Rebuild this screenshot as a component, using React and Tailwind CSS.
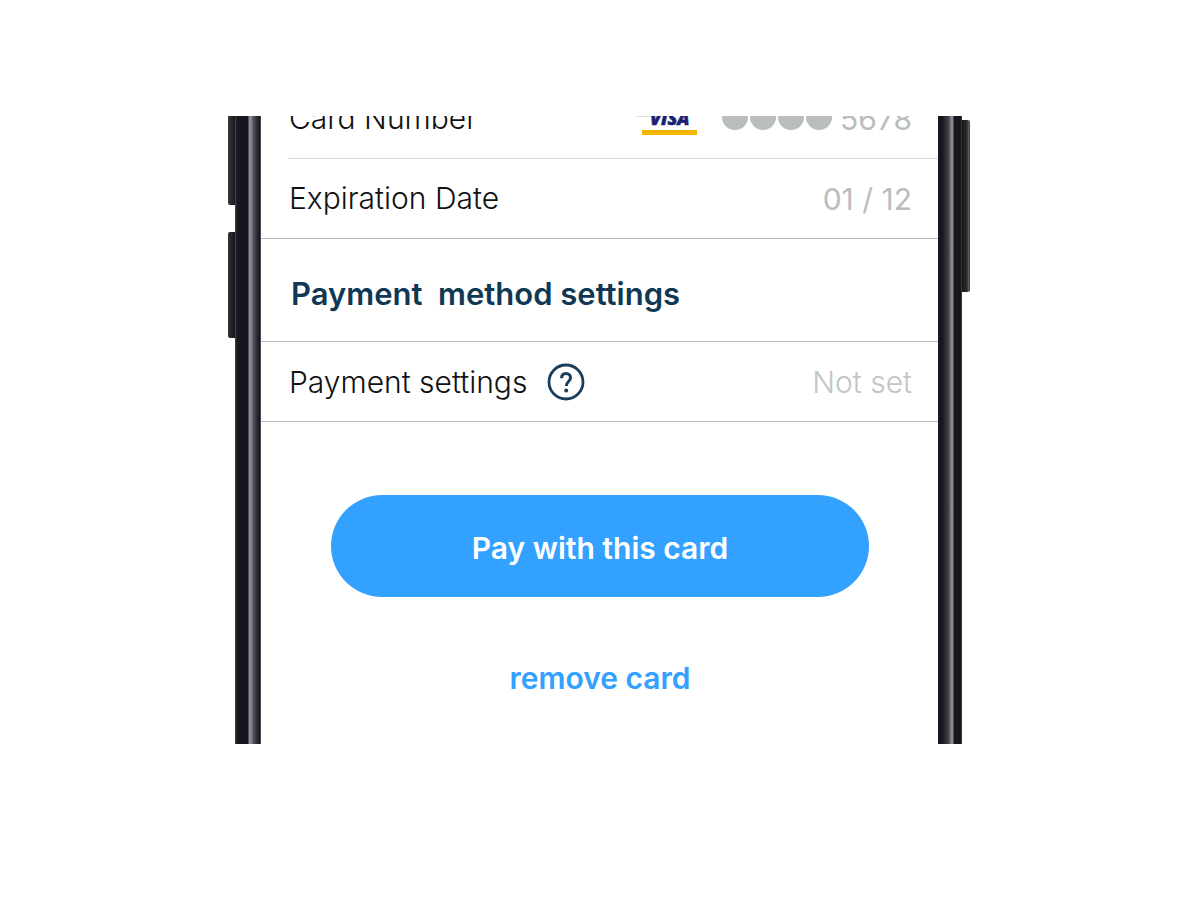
import React from 'react';

const VisaLogo = () => (
  <svg className="w-[62px] h-10 shrink-0" viewBox="0 0 62 40" role="img" aria-label="Visa">
    <path d="M0 17.5H15" stroke="#dcdedf" strokeWidth="1" />
    <text
      x="14"
      y="26"
      fill="#1a1f71"
      stroke="#1a1f71"
      strokeWidth="0.6"
      fontFamily="'Open Sans', sans-serif"
      fontSize="18"
      fontStyle="italic"
      fontWeight="800"
    >
      VISA
    </text>
    <rect x="6" y="31" width="55" height="5" fill="#f7b600" />
  </svg>
);

const HelpIcon = () => (
  <svg className="w-[38px] h-[38px]" viewBox="0 0 38 38" fill="none" stroke="#1b3d5c" strokeWidth="3">
    <circle cx="19" cy="19" r="17" strokeWidth="2.8" />
    <path d="M14.6 15.2c0-2.9 1.8-4.7 4.4-4.7s4.5 1.6 4.5 4.2c0 3.7-4.2 3.9-4.2 8.3" />
    <circle cx="19.2" cy="27.4" r="2" fill="#1b3d5c" stroke="none" />
  </svg>
);

const Bezel = ({ side }) => (
  <div
    className={
      side === 'left'
        ? 'w-[26px] shrink-0 bg-[linear-gradient(90deg,#4a4a4e_0px,#17181f_2px,#16171e_13px,#8d8a92_14px,#8d8a92_16px,#5a5860_18px,#2c2b33_22px,#16151b_25px,#77777a_26px)]'
        : 'w-6 shrink-0 bg-[linear-gradient(90deg,#1a1b22_0px,#14151b_4px,#24252c_6px,#45444b_11px,#8a888f_13px,#8a888f_15px,#17171e_16px,#15161e_23px,#55555a_24px)]'
    }
  />
);

const Row = ({ label, children }) => (
  <div className="flex h-[79px] shrink-0 items-center justify-between pl-7 pr-[26px]">
    <div className="flex items-center text-[30px] leading-10 font-light text-[#111]">{label}</div>
    {children}
  </div>
);

const App = () => {
  return (
    <main className="min-h-screen bg-white pt-[116px] pr-1 font-['Inter',sans-serif]">
      <div className="mx-auto flex w-full max-w-[742px]">
        {/* Volume buttons */}
        <div className="flex w-[7px] shrink-0 flex-col">
          <div className="h-[89px] rounded-bl-xs bg-linear-to-r from-[#3b3b3d] to-[#16161c]" />
          <div className="mt-[27px] h-[106px] rounded-l-xs bg-linear-to-r from-[#333335] to-[#17181c]" />
        </div>
        <Bezel side="left" />

        {/* Screen */}
        <section className="flex min-w-0 grow flex-col overflow-hidden bg-white pb-[46px]">
          <div className="flex h-[42px] flex-col justify-end overflow-hidden">
            <Row label={<span className="pb-[2px]">Card Number</span>}>
              <div className="flex items-center text-[30px] leading-10 font-normal text-[#b9bdbd]">
                <VisaLogo />
                <span className="ml-6 flex gap-[2px] pb-[3px]" aria-label="Hidden digits">
                  <span className="size-[26px] rounded-full bg-[#b9bdbd]" />
                  <span className="size-[26px] rounded-full bg-[#b9bdbd]" />
                  <span className="size-[26px] rounded-full bg-[#b9bdbd]" />
                  <span className="size-[26px] rounded-full bg-[#b9bdbd]" />
                </span>
                <span className="ml-2">5678</span>
              </div>
            </Row>
          </div>
          <div className="ml-[27px] h-px bg-[#d9dbdb]" />

          <Row label={<span className="pb-[2px]">Expiration Date</span>}>
            <span className="text-[30px] leading-10 font-normal text-[#b9bdbd]">01 / 12</span>
          </Row>

          <h2 className="border-y border-[#b9bcbc] pt-9 pb-7 pl-[30px] text-[31px] leading-[38px] font-semibold whitespace-pre text-[#0f3855]">
            {'Payment  method settings'}
          </h2>

          <div className="border-b border-[#b9bcbc]">
            <Row
              label={
                <>
                  Payment settings
                  <button type="button" className="ml-5" aria-label="About payment settings">
                    <HelpIcon />
                  </button>
                </>
              }
            >
              <span className="text-[30px] leading-10 font-light text-[#c2c5c5]">Not set</span>
            </Row>
          </div>

          <div className="flex flex-col items-center pt-[73px] pr-[69px] pl-[70px]">
            <button
              type="button"
              className="h-[102px] w-full rounded-full bg-[#33a1ff] pt-1 text-[30px] leading-10 font-semibold text-white"
            >
              Pay with this card
            </button>
            <button type="button" className="mt-[61px] text-[30px] leading-10 font-semibold text-[#33a1ff]">
              remove card
            </button>
          </div>
        </section>

        <Bezel side="right" />
        {/* Power button */}
        <div className="flex w-2 shrink-0 flex-col pt-1">
          <div className="h-[172px] rounded-r-xs bg-[linear-gradient(90deg,#17171b_0px,#2b2c2d_5px,#6b6b6d_7px,#222_8px)]" />
        </div>
      </div>
    </main>
  );
};

export default App;
